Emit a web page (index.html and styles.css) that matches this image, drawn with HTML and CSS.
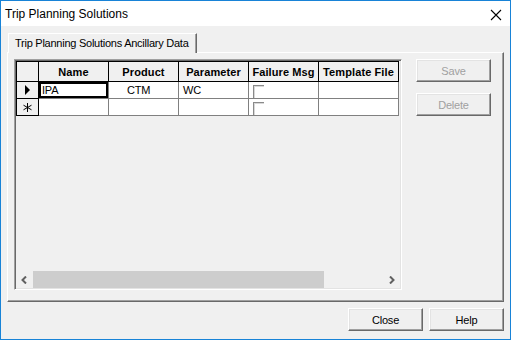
FILE: index.html
```html
<!DOCTYPE html>
<html lang="en">
<head>
    <meta charset="UTF-8">
    <title>Trip Planning Solutions</title>
    <link rel="stylesheet" href="styles.css">
</head>
<body>
    <div class="window">
        <div class="titlebar">
            <span class="title">Trip Planning Solutions</span>
            <svg class="close-x" width="12" height="12" viewBox="0 0 12 12">
                <path d="M1 1 L11 11 M11 1 L1 11" stroke="#000" stroke-width="1.1" fill="none"/>
            </svg>
        </div>
        <div class="client">
            <div class="tab">Trip Planning Solutions Ancillary Data</div>
            <div class="panel">
                <div class="grid">
                    <table class="grid-table">
                        <colgroup>
                            <col class="c-head">
                            <col class="c-std">
                            <col class="c-std">
                            <col class="c-std">
                            <col class="c-std">
                            <col class="c-wide">
                        </colgroup>
                        <thead>
                            <tr>
                                <th class="rowhead"></th>
                                <th>Name</th>
                                <th>Product</th>
                                <th>Parameter</th>
                                <th>Failure Msg</th>
                                <th>Template File</th>
                            </tr>
                        </thead>
                        <tbody>
                            <tr>
                                <td class="rowhead">
                                    <svg width="8" height="10" viewBox="0 0 8 10"><path d="M1 0 L6 5 L1 10 Z" fill="#000"/></svg>
                                </td>
                                <td class="current">IPA</td>
                                <td class="product">CTM</td>
                                <td>WC</td>
                                <td><span class="check"></span></td>
                                <td></td>
                            </tr>
                            <tr>
                                <td class="rowhead">
                                    <svg width="9" height="9" viewBox="0 0 9 9"><path d="M4.5 0 V9 M0.5 2.2 L8.5 6.8 M0.5 6.8 L8.5 2.2" stroke="#000" stroke-width="1" fill="none"/></svg>
                                </td>
                                <td></td>
                                <td></td>
                                <td></td>
                                <td><span class="check"></span></td>
                                <td></td>
                            </tr>
                        </tbody>
                    </table>
                    <div class="hscroll">
                        <span class="arrow">
                            <svg width="7" height="8" viewBox="0 0 7 8"><path d="M5 0.5 L1.5 4 L5 7.5" stroke="#606060" stroke-width="2" fill="none"/></svg>
                        </span>
                        <span class="track"><span class="thumb"></span></span>
                        <span class="arrow">
                            <svg width="7" height="8" viewBox="0 0 7 8"><path d="M2 0.5 L5.5 4 L2 7.5" stroke="#606060" stroke-width="2" fill="none"/></svg>
                        </span>
                    </div>
                </div>
                <div class="side-buttons">
                    <button class="btn" disabled>Save</button>
                    <button class="btn" disabled>Delete</button>
                </div>
            </div>
            <div class="footer">
                <button class="btn">Close</button>
                <button class="btn">Help</button>
            </div>
        </div>
    </div>
</body>
</html>
```

FILE: styles.css
```css
body {
    margin: 0;
    font-family: "Liberation Sans", Arial, sans-serif;
    font-size: 11px;
}
.window {
    width: 511px;
    height: 340px;
    box-sizing: border-box;
    border: 1px solid #1883d7;
    display: flex;
    flex-direction: column;
    background: #f0f0f0;
}
.titlebar {
    height: 25px;
    background: #fff;
    display: flex;
    align-items: center;
    justify-content: space-between;
    padding: 0 8px 0 4px;
    flex-shrink: 0;
}
.title {
    font-size: 12px;
    color: #000;
    padding-top: 1px;
}
.close-x {
    margin-top: 2px;
}
.client {
    flex: 1;
    padding: 7px 6px 0 6px;
    display: flex;
    flex-direction: column;
}
.tab {
    align-self: flex-start;
    margin-left: 1px;
    margin-bottom: -1px;
    height: 20px;
    box-sizing: border-box;
    padding: 3px 7px 0 6px;
    background: #f0f0f0;
    border-top: 1px solid #fff;
    border-left: 1px solid #fff;
    border-right: 1px solid #696969;
    box-shadow: inset -1px 0 #a0a0a0;
    letter-spacing: -0.25px;
    position: relative;
    z-index: 1;
}
.panel {
    height: 250px;
    box-sizing: border-box;
    border-top: 1px solid #fff;
    border-left: 1px solid #fff;
    border-right: 1px solid #696969;
    border-bottom: 1px solid #696969;
    box-shadow: inset -1px -1px #a0a0a0;
    padding: 6px 0 0 6px;
    display: flex;
    gap: 14px;
}
.grid {
    width: 388px;
    height: 231px;
    box-sizing: border-box;
    border-top: 1px solid #a0a0a0;
    border-left: 1px solid #a0a0a0;
    border-right: 1px solid #fff;
    border-bottom: 1px solid #fff;
    box-shadow: inset 1px 1px #696969, inset -1px -1px #e3e3e3;
    padding: 1px;
    display: flex;
    flex-direction: column;
    background: #f0f0f0;
}
.grid-table {
    border-collapse: collapse;
    table-layout: fixed;
    width: 382px;
    letter-spacing: -0.2px;
}
.c-head { width: 22px; }
.c-std { width: 70px; }
.c-wide { width: 80px; }
.grid-table th {
    height: 19px;
    padding: 0;
    border: 1px solid #000;
    background: #f0f0f0;
    font-weight: bold;
    letter-spacing: 0.1px;
    text-align: center;
    white-space: nowrap;
    overflow: hidden;
}
.grid-table td {
    height: 16px;
    padding: 0 0 0 4px;
    border: 1px solid #808080;
    background: #fff;
    white-space: nowrap;
    overflow: hidden;
    vertical-align: middle;
}
.grid-table td.rowhead {
    background: #f0f0f0;
    border-color: #000;
    padding: 0;
    text-align: center;
}
.rowhead svg {
    display: block;
    margin: 0 auto;
}
.grid-table td.current {
    box-shadow: inset 0 0 0 2px #000;
    padding-left: 3px;
}
.grid-table td.product {
    padding-left: 18px;
}
.check {
    display: block;
    width: 11px;
    height: 13px;
    margin-top: 2px;
    box-sizing: border-box;
    border-top: 1px solid #8a8a8a;
    border-left: 1px solid #8a8a8a;
    box-shadow: inset 1px 1px #d8d8d8;
}
.hscroll {
    margin-top: auto;
    height: 17px;
    display: flex;
    background: #f0f0f0;
}
.arrow {
    width: 17px;
    display: flex;
    align-items: center;
    justify-content: center;
}
.track {
    flex: 1;
    display: flex;
}
.thumb {
    width: 291px;
    background: #cdcdcd;
}
.side-buttons {
    display: flex;
    flex-direction: column;
    gap: 11px;
}
.btn {
    width: 75px;
    height: 23px;
    box-sizing: border-box;
    font-family: "Liberation Sans", Arial, sans-serif;
    font-size: 11px;
    letter-spacing: -0.2px;
    color: #000;
    background: #f0f0f0;
    border-top: 1px solid #fff;
    border-left: 1px solid #fff;
    border-right: 1px solid #696969;
    border-bottom: 1px solid #696969;
    box-shadow: inset -1px -1px #a0a0a0, inset 1px 1px #e3e3e3;
    padding: 0;
}
.btn:disabled {
    color: #a0a0a0;
}
.footer {
    margin-top: 6px;
    display: flex;
    justify-content: flex-end;
    gap: 6px;
}
```
